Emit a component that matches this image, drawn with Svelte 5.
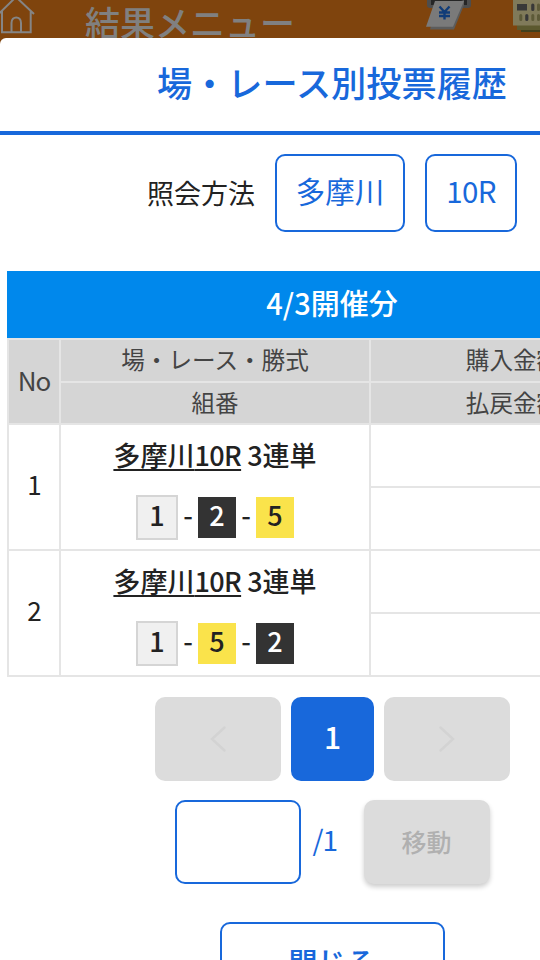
<script lang="ts">
  const BETS = [
    { no: 1, race: '10R', place: '多摩川', type: '3連単', boats: [1, 2, 5] },
    { no: 2, race: '10R', place: '多摩川', type: '3連単', boats: [1, 5, 2] },
  ]

  let page = $state('')
</script>

<div class="screen">
  <header class="menu-bar">
    <svg class="home" width="36" height="38" viewBox="0 0 36 38">
      <path d="M-2 14.500L16 -3L34 14M2 11V32.300H30.700V11M11.500 32V23C11.500 15.500 21 15.500 21 23V32" />
    </svg>
    <span class="menu-title">結果メニュー</span>
    <svg class="deposit" width="46" height="38" viewBox="0 0 46 38">
      <path d="M1 0H45V5Q45 8 42 8H4Q1 8 1 5Z" fill="#4d4d4d" />
      <path d="M5 0H41V5H5Z" fill="#262626" />
      <path d="M9 10L4 29.500H28L38 5L38 0Z" fill="#5c5c5c" />
      <path d="M9 1H38L27 26.800H0Z" fill="#7a7a7a" />
      <path d="M13.500 6.500L18.500 12L23.500 6.500M18.500 12V19.500M13 12.500H24M13 16H24" fill="none" stroke="#103c78" stroke-width="2.400" />
    </svg>
    <svg class="tickets" width="27" height="38" viewBox="0 0 27 38">
      <path d="M8 25H27V32H8Z" fill="#42401c" />
      <path d="M4 22H27V30H4Z" fill="#5c592f" />
      <path d="M0 0H27V25.500H0Z" fill="#807a5a" />
      <path d="M4 4H14V10.500H4Z" fill="#383838" />
      <path d="M19.800 5V9.500M13.800 15.500V19.500" stroke="#383838" stroke-width="3.200" stroke-linecap="round" />
      <path d="M25.500 5V9.500M7.800 15.500V19.500M19.800 15.500V19.500M25.500 15.500V19.500" stroke="#5d5a38" stroke-width="3" stroke-linecap="round" />
    </svg>
  </header>

  <main class="modal">
    <h1>場・レース別投票履歴</h1>

    <div class="filters">
      <span class="filter-label">照会方法</span>
      <button class="filter place">多摩川</button>
      <button class="filter race-no">10R</button>
    </div>

    <section class="history">
      <h2>4/3開催分</h2>
      <table>
        <colgroup>
          <col class="col-no" />
          <col class="col-race" />
          <col />
        </colgroup>
        <thead>
          <tr>
            <th rowspan="2" class="no">No</th>
            <th>場・レース・勝式</th>
            <th>購入金額</th>
          </tr>
          <tr>
            <th>組番</th>
            <th>払戻金額</th>
          </tr>
        </thead>
        <tbody>
          {#each BETS as { no, place, race, type, boats }}
            <tr>
              <td rowspan="2" class="no">{no}</td>
              <td rowspan="2">
                <div class="bet">
                  <div class="bet-name"><a href="#race">{place}<span class="narrow">{race}</span></a> {type}</div>
                  <div class="boats">
                    {#each boats as boat, i}
                      {#if i > 0}<span class="dash">-</span>{/if}
                      <span class="boat boat-{boat}">{boat}</span>
                    {/each}
                  </div>
                </div>
              </td>
              <td></td>
            </tr>
            <tr>
              <td></td>
            </tr>
          {/each}
        </tbody>
      </table>
    </section>

    <nav class="pager">
      <button class="arrow" disabled aria-label="前へ">
        <svg width="18" height="28" viewBox="0 0 18 28"><path d="M15.500 2.500L3 14L15.500 25.500" /></svg>
      </button>
      <button class="current">1</button>
      <button class="arrow" disabled aria-label="次へ">
        <svg width="18" height="28" viewBox="0 0 18 28"><path d="M2.500 2.500L15 14L2.500 25.500" /></svg>
      </button>
    </nav>

    <div class="jump">
      <input type="text" bind:value={page} aria-label="ページ" />
      <span class="total">/1</span>
      <button class="move" disabled>移動</button>
    </div>

    <button class="close">閉じる</button>
  </main>
</div>

<style>
  :global(body) {
    background: #7f440d;
  }

  .screen {
    width: 540px;
    height: 960px;
    overflow: hidden;
    background: #7f440d;
    font-family: 'Noto Sans CJK JP', sans-serif;
    color: #222;
  }

  button,
  input {
    box-sizing: border-box;
    padding: 0;
    margin: 0;
    font-family: inherit;
    border-radius: 10px;
  }

  /* dimmed menu behind the dialog */
  .menu-bar {
    display: flex;
    height: 38px;
    overflow: hidden;
  }

  .home {
    flex: none;
    fill: none;
    stroke: #858585;
    stroke-width: 2;
  }

  .menu-title {
    width: 341px;
    margin-left: 49px;
    flex: none;
    font-size: 35px;
    font-weight: 500;
    line-height: 43px;
    color: #808080;
  }

  .deposit {
    flex: none;
  }

  .tickets {
    flex: none;
    margin-left: 41px;
  }

  /* the dialog is wider than the viewport and runs off its right edge */
  .modal {
    width: 664px;
    background: #fff;
    border-top-left-radius: 6px;
    display: flex;
    flex-direction: column;
    align-items: center;
  }

  h1 {
    box-sizing: border-box;
    width: 100%;
    height: 97px;
    margin: 0;
    border-bottom: 4px solid #1868db;
    text-align: center;
    font-size: 35.200px;
    font-weight: 500;
    line-height: 87px;
    color: #1868db;
  }

  .filters {
    display: flex;
    align-items: center;
    gap: 20px;
    height: 78px;
    margin-top: 19px;
  }

  .filter-label {
    padding-bottom: 2px;
    font-size: 27px;
  }

  .filter {
    height: 78px;
    border: 2px solid #1868db;
    background: #fff;
    font-size: 29.500px;
    line-height: 68px;
    padding-bottom: 6px;
    color: #1868db;
  }

  .place {
    width: 130px;
  }

  .race-no {
    width: 92px;
    letter-spacing: -0.6px;
  }

  .history {
    width: 650px;
    margin-top: 39px;
  }

  h2 {
    height: 67px;
    margin: 0;
    background: #0088ec;
    color: #fff;
    text-align: center;
    font-size: 29px;
    font-weight: 500;
    line-height: 62px;
  }

  table {
    width: 650px;
    table-layout: fixed;
    border-collapse: collapse;
  }

  .col-no {
    width: 52px;
  }

  .col-race {
    width: 310px;
  }

  th,
  td {
    box-sizing: border-box;
    padding: 0;
    border: 2px solid #e5e5e5;
    text-align: center;
    vertical-align: middle;
  }

  th {
    height: 42.500px;
    padding-bottom: 2px;
    background: #d5d5d5;
    font-size: 23.600px;
    font-weight: 400;
    line-height: 36px;
    color: #444;
  }

  td {
    height: 63px;
  }

  .no {
    padding-bottom: 4px;
    font-size: 26px;
    letter-spacing: -1px;
  }

  td.no {
    padding-bottom: 7px;
  }

  .bet {
    height: 120px;
  }

  .bet-name {
    padding-top: 8px;
    font-size: 27px;
    font-weight: 500;
    line-height: 40px;
  }

  .bet-name a {
    color: inherit;
    text-decoration-thickness: 2px;
    text-underline-offset: 3px;
  }

  .narrow {
    letter-spacing: -0.6px;
  }

  .boats {
    display: flex;
    align-items: center;
    justify-content: center;
    height: 45px;
    margin-top: 20px;
    font-size: 27px;
    font-weight: 500;
  }

  .boat {
    box-sizing: border-box;
    width: 38px;
    height: 41px;
    line-height: 36px;
  }

  .boat-1 {
    width: 42px;
    height: 45px;
    border: 2px solid #d5d5d5;
    background: #f0f0f0;
  }

  .boat-2 {
    background: #333;
    color: #fff;
  }

  .boat-5 {
    background: #fae34b;
  }

  .dash {
    width: 20px;
    padding-bottom: 6px;
    line-height: 36px;
  }

  .pager {
    display: flex;
    gap: 10px;
    margin: 20px 0 0 1px;
  }

  .pager button {
    height: 84px;
    border: none;
  }

  .pager .arrow {
    width: 126px;
    background: #dcdcdc;
  }

  .arrow svg {
    display: block;
    margin: 0 auto;
    fill: none;
    stroke: #d3d3d3;
    stroke-width: 2.500;
    stroke-linecap: round;
  }

  .pager .current {
    width: 83px;
    background: #1868db;
    color: #fff;
    font-size: 30px;
    font-weight: 500;
    padding-bottom: 7px;
  }

  .jump {
    display: flex;
    align-items: center;
    margin-top: 19px;
  }

  .jump input {
    width: 126px;
    height: 84px;
    border: 2px solid #1868db;
    font-size: 27px;
    text-align: center;
  }

  .total {
    width: 63px;
    box-sizing: border-box;
    padding: 0 0 7px 12px;
    font-size: 28px;
    letter-spacing: -1px;
    color: #1868db;
  }

  .move {
    width: 126px;
    height: 84px;
    padding-bottom: 3px;
    border: none;
    background: #dcdcdc;
    box-shadow: 0 3px 5px rgba(0, 0, 0, 0.2);
    font-size: 25px;
    font-weight: 500;
    color: #b0b0b0;
  }

  .close {
    width: 225px;
    height: 78px;
    margin: 38px 0 40px;
    border: 2px solid #1868db;
    background: #fff;
    font-size: 29px;
    font-weight: 500;
    color: #1868db;
  }
</style>
